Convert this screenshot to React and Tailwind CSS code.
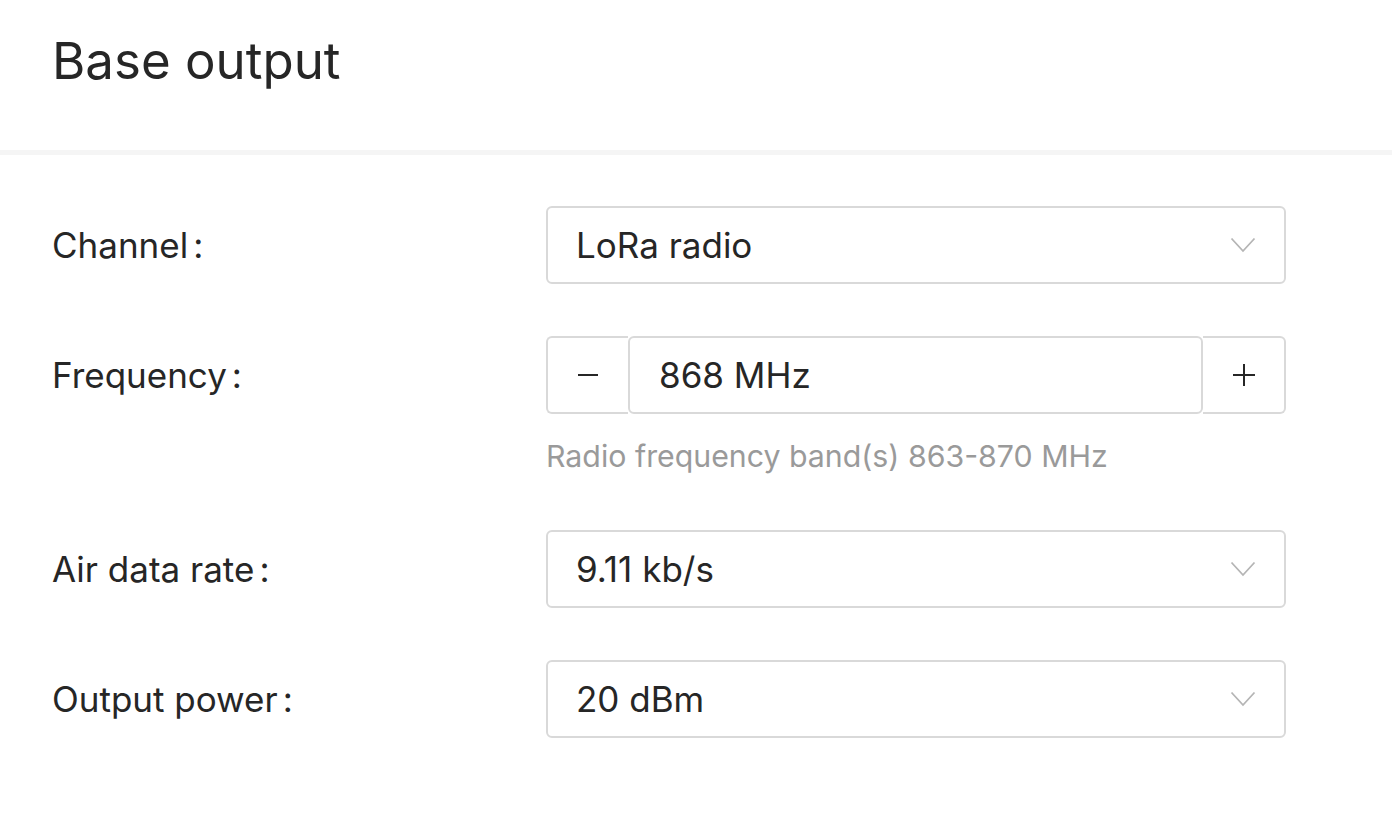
import React from "react";

const Chevron = () => (
  <svg width="26" height="16" viewBox="0 0 26 16" fill="none" className="shrink-0">
    <path d="M1.5 1.5 L13 14 L24.5 1.5" stroke="#b5b5b5" strokeWidth="1.8" />
  </svg>
);

const Minus = () => (
  <svg width="22" height="22" viewBox="0 0 22 22" fill="none">
    <path d="M1 11 H21" stroke="#262626" strokeWidth="2" />
  </svg>
);

const Plus = () => (
  <svg width="22" height="22" viewBox="0 0 22 22" fill="none">
    <path d="M0 11 H22 M11 0 V22" stroke="#262626" strokeWidth="2" />
  </svg>
);

const Select = ({ value }) => (
  <div className="flex h-[78px] w-[740px] items-center justify-between rounded-[6px] border-2 border-[#d9d9d9] bg-white pl-[28px] pr-[28px]">
    <span className="text-[35px] text-[#262626]">{value}</span>
    <Chevron />
  </div>
);

const Row = ({ label, children }) => (
  <div className="flex items-start">
    <div className="flex h-[78px] w-[494px] items-center text-[35px] text-[#262626]">
      {label}
      <span className="ml-[5px]">:</span>
    </div>
    <div>{children}</div>
  </div>
);

export default function App() {
  return (
    <div className="min-h-screen bg-white font-['Inter',sans-serif]">
      <div className="flex h-[150px] items-center px-[52px] pb-[28px]">
        <h1 className="text-[51px] font-normal text-[#262626]">Base output</h1>
      </div>
      <div className="h-[5px] bg-[#f5f5f5]" />
      <div className="flex flex-col gap-[52px] px-[52px] pt-[51px]">
        <Row label="Channel">
          <Select value="LoRa radio" />
        </Row>
        <Row label="Frequency">
          <div className="flex h-[78px] w-[740px]">
            <div className="flex w-[82px] items-center justify-center rounded-l-[6px] border-2 border-r-0 border-[#d9d9d9]">
              <Minus />
            </div>
            <div className="flex flex-1 items-center rounded-[6px] border-2 border-[#d9d9d9] px-[29px] text-[35px] text-[#262626]">
              868 MHz
            </div>
            <div className="flex w-[83px] items-center justify-center rounded-r-[6px] border-2 border-l-0 border-[#d9d9d9]">
              <Plus />
            </div>
          </div>
          <div className="mt-[20px] h-[44px] text-[30.3px] leading-[44px] text-[#9a9a9a]">
            Radio frequency band(s) 863-870 MHz
          </div>
        </Row>
        <Row label="Air data rate">
          <Select value="9.11 kb/s" />
        </Row>
        <Row label="Output power">
          <Select value="20 dBm" />
        </Row>
      </div>
    </div>
  );
}
